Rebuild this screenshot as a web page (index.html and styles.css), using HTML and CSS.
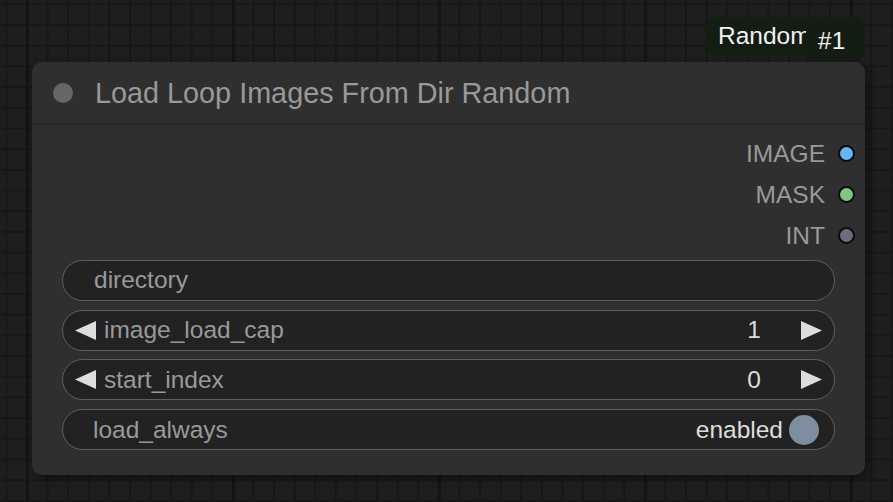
FILE: index.html
```html
<!DOCTYPE html>
<html>
<head>
<meta charset="utf-8">
<link rel="stylesheet" href="styles.css">
</head>
<body>
<div class="canvas">
  <div class="badge">
    <span class="badge-name">Random</span>
    <span class="badge-id">#1</span>
  </div>
  <div class="node">
    <div class="node-title">
      <span class="title-dot"></span>
      <span class="title-text">Load Loop Images From Dir Random</span>
    </div>
    <div class="node-body">
      <div class="outputs">
        <div class="slot"><span class="slot-label">IMAGE</span><span class="slot-dot dot-image"></span></div>
        <div class="slot"><span class="slot-label">MASK</span><span class="slot-dot dot-mask"></span></div>
        <div class="slot"><span class="slot-label">INT</span><span class="slot-dot dot-int"></span></div>
      </div>
      <div class="widgets">
        <div class="widget widget-text"><span class="w-label">directory</span></div>
        <div class="widget widget-number">
          <svg class="arrow" width="21" height="19" viewBox="0 0 21 19"><polygon points="21,0 21,19 0,9.5" fill="#dddddd"/></svg>
          <span class="w-label">image_load_cap</span>
          <span class="w-value">1</span>
          <svg class="arrow" width="21" height="19" viewBox="0 0 21 19"><polygon points="0,0 0,19 21,9.5" fill="#dddddd"/></svg>
        </div>
        <div class="widget widget-number">
          <svg class="arrow" width="21" height="19" viewBox="0 0 21 19"><polygon points="21,0 21,19 0,9.5" fill="#dddddd"/></svg>
          <span class="w-label">start_index</span>
          <span class="w-value">0</span>
          <svg class="arrow" width="21" height="19" viewBox="0 0 21 19"><polygon points="0,0 0,19 21,9.5" fill="#dddddd"/></svg>
        </div>
        <div class="widget widget-toggle">
          <span class="w-label">load_always</span>
          <span class="w-value">enabled</span>
          <span class="toggle-dot"></span>
        </div>
      </div>
    </div>
  </div>
</div>
</body>
</html>
```
FILE: styles.css
```css
* { box-sizing: border-box; }
html, body {
  margin: 0;
  padding: 0;
  width: 893px;
  height: 502px;
  overflow: hidden;
}
body {
  font-family: "Liberation Sans", Arial, sans-serif;
  background-color: #1e1e1e;
  background-image:
    linear-gradient(to right, #141414 3px, transparent 3px),
    linear-gradient(to right, #171717 2px, transparent 2px),
    linear-gradient(to bottom, #171717 2px, transparent 2px);
  background-size: 206px 100%, 20.6px 100%, 100% 20.7px;
  background-position: 26px 0, 26px 0, 0 24px;
}
.canvas {
  position: relative;
  width: 893px;
  height: 502px;
}
.badge {
  position: absolute;
  left: 705px;
  top: 17px;
  display: flex;
  align-items: flex-start;
}
.badge-name {
  display: block;
  width: 101px;
  height: 38px;
  padding: 5px 0 0 13px;
  background: #131d12;
  color: #f2f2f2;
  font-size: 24.5px;
  line-height: 28px;
  white-space: nowrap;
  overflow: hidden;
  border-radius: 10px 0 0 10px;
}
.badge-id {
  display: block;
  width: 59px;
  height: 44px;
  padding: 11px 0 0 12px;
  background: #131d12;
  color: #f2f2f2;
  font-size: 24.5px;
  line-height: 26px;
  border-radius: 0 10px 10px 0;
}
.node {
  position: absolute;
  left: 32px;
  top: 62px;
  width: 833px;
  height: 413px;
  background: #2f2f2f;
  border-radius: 10px;
  box-shadow: 3px 3px 8px rgba(0, 0, 0, 0.45);
}
.node-title {
  height: 63px;
  border-bottom: 2px solid #272727;
  display: flex;
  align-items: center;
  padding-left: 21px;
  padding-top: 1px;
}
.title-dot {
  width: 20px;
  height: 20px;
  border-radius: 50%;
  background: #666666;
  flex: none;
}
.title-text {
  margin-left: 22px;
  font-size: 28.8px;
  color: #999999;
  white-space: nowrap;
}
.node-body {
  padding-top: 8px;
}
.outputs {
  display: flex;
  flex-direction: column;
  align-items: flex-end;
  padding-right: 10px;
}
.slot {
  height: 41.2px;
  display: flex;
  align-items: center;
}
.slot-label {
  font-size: 24.5px;
  color: #999999;
  margin-right: 13px;
}
.slot-dot {
  width: 17px;
  height: 17px;
  border-radius: 50%;
  border: 2px solid #0c0c0c;
}
.dot-image { background: #64b5f6; }
.dot-mask { background: #81c784; }
.dot-int { background: #6d6d7d; }
.widgets {
  margin-top: 3.4px;
  padding: 0 30px;
  display: flex;
  flex-direction: column;
  gap: 8.7px;
}
.widget {
  height: 41px;
  background: #222222;
  border: 1.5px solid #5f5f5f;
  border-radius: 21px;
  display: flex;
  align-items: center;
  font-size: 24.5px;
}
.w-label {
  color: #999999;
  white-space: nowrap;
}
.w-value {
  color: #dddddd;
  margin-left: auto;
}
.widget-text {
  padding-left: 31px;
}
.widget-number {
  padding: 0 12px;
}
.widget-number .w-label {
  margin-left: 8px;
}
.widget-number .w-value {
  margin-right: 40px;
}
.widget-toggle {
  padding: 0 15px 0 30px;
}
.toggle-dot {
  width: 30px;
  height: 30px;
  border-radius: 50%;
  background: #7d8e9e;
  margin-left: 6px;
}
```
